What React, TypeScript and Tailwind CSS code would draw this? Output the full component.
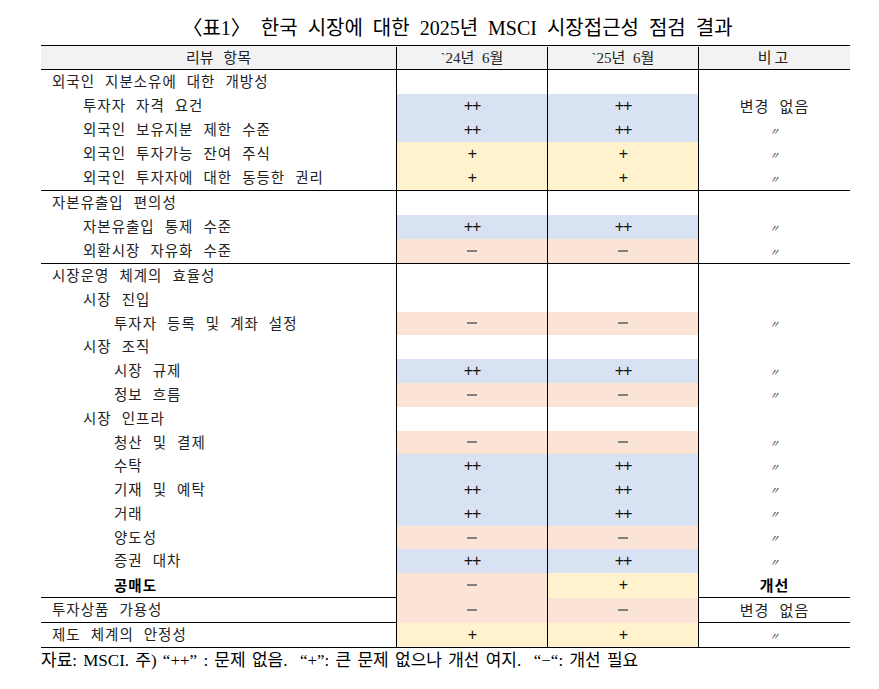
import React from 'react'

type Mark = '++' | '+' | '-' | ''

interface Row {
  label: string
  level: 0 | 1 | 2
  y24?: Mark
  y25?: Mark
  note?: string
  bold?: boolean
}

const SERIF = 'font-["Liberation_Serif","Noto_Sans_CJK_KR",serif]'
const SANS = 'font-["Liberation_Sans","Noto_Sans_CJK_KR",sans-serif]'

const groups: { rows: Row[]; heightClass?: string }[] = [
  {
    rows: [
      { label: '외국인 지분소유에 대한 개방성', level: 0 },
      { label: '투자자 자격 요건', level: 1, y24: '++', y25: '++', note: '변경 없음' },
      { label: '외국인 보유지분 제한 수준', level: 1, y24: '++', y25: '++', note: '〃' },
      { label: '외국인 투자가능 잔여 주식', level: 1, y24: '+', y25: '+', note: '〃' },
      { label: '외국인 투자자에 대한 동등한 권리', level: 1, y24: '+', y25: '+', note: '〃' },
    ],
  },
  {
    rows: [
      { label: '자본유출입 편의성', level: 0 },
      { label: '자본유출입 통제 수준', level: 1, y24: '++', y25: '++', note: '〃' },
      { label: '외환시장 자유화 수준', level: 1, y24: '-', y25: '-', note: '〃' },
    ],
  },
  {
    heightClass: 'h-[334px] grid grid-rows-14',
    rows: [
      { label: '시장운영 체계의 효율성', level: 0 },
      { label: '시장 진입', level: 1 },
      { label: '투자자 등록 및 계좌 설정', level: 2, y24: '-', y25: '-', note: '〃' },
      { label: '시장 조직', level: 1 },
      { label: '시장 규제', level: 2, y24: '++', y25: '++', note: '〃' },
      { label: '정보 흐름', level: 2, y24: '-', y25: '-', note: '〃' },
      { label: '시장 인프라', level: 1 },
      { label: '청산 및 결제', level: 2, y24: '-', y25: '-', note: '〃' },
      { label: '수탁', level: 2, y24: '++', y25: '++', note: '〃' },
      { label: '기재 및 예탁', level: 2, y24: '++', y25: '++', note: '〃' },
      { label: '거래', level: 2, y24: '++', y25: '++', note: '〃' },
      { label: '양도성', level: 2, y24: '-', y25: '-', note: '〃' },
      { label: '증권 대차', level: 2, y24: '++', y25: '++', note: '〃' },
      { label: '공매도', level: 2, y24: '-', y25: '+', note: '개선', bold: true },
    ],
  },
  {
    rows: [{ label: '투자상품 가용성', level: 0, y24: '-', y25: '-', note: '변경 없음' }],
  },
  {
    rows: [{ label: '제도 체계의 안정성', level: 0, y24: '+', y25: '+', note: '〃' }],
  },
]

const INDENT: Record<number, string> = { 0: 'pl-[11px]', 1: 'pl-[42px]', 2: 'pl-[73px]' }

function MarkCell({ mark }: { mark?: Mark }) {
  const bg =
    mark === '++' ? 'bg-[#d9e2f3]' : mark === '+' ? 'bg-[#fff2cc]' : mark === '-' ? 'bg-[#fbe4d5]' : 'bg-white'
  return (
    <div className={`border-l border-black flex items-center justify-center ${bg}`}>
      {mark === '-' ? (
        <span className="block w-[10px] h-[2px] bg-[#808080]" />
      ) : (
        <span className="text-[16px] leading-none text-[#111] tracking-[-1px]">{mark}</span>
      )}
    </div>
  )
}

function TableRow({ row, fixed }: { row: Row; fixed: boolean }) {
  return (
    <div className={`grid grid-cols-[355px_151px_151px_152px] ${fixed ? 'h-6' : ''}`}>
      <div
        className={`flex items-center pt-[2px] ${INDENT[row.level]} text-[14.5px] tracking-[1px] text-[#222] [word-spacing:5px] ${row.bold ? 'font-bold text-black' : ''}`}
      >
        {row.label}
      </div>
      <MarkCell mark={row.y24} />
      <MarkCell mark={row.y25} />
      <div className="border-l border-black flex items-center justify-center pt-[2px]">
        {row.note === '〃' ? (
          <span className="text-[10px] text-[#333] italic">〃</span>
        ) : (
          <span
            className={`text-[15px] tracking-[1px] text-[#222] [word-spacing:5px] ${row.bold ? 'font-bold text-black' : ''}`}
          >
            {row.note}
          </span>
        )}
      </div>
    </div>
  )
}

export default function App() {
  return (
    <div className={`w-[879px] h-[689px] bg-white ${SANS}`}>
      {/* Title */}
      <div
        className={`h-[45px] pt-[10px] flex items-center justify-center pl-[36px] text-[20px] text-black [word-spacing:5px] ${SERIF}`}
      >
        〈표1〉 한국 시장에 대한 2025년 MSCI 시장접근성 점검 결과
      </div>

      <div className="ml-[41px] w-[809px] border-t border-black">
        {/* Header */}
        <div
          className={`grid grid-cols-[355px_151px_151px_152px] h-6 pt-[1px] bg-[#f2f2f2] border-b border-black text-[15px] text-[#222] ${SERIF}`}
        >
          <div className="flex items-center justify-center [word-spacing:6px]">리뷰 항목</div>
          <div className="border-l border-black flex items-center justify-center [word-spacing:4px]">`24년 6월</div>
          <div className="border-l border-black flex items-center justify-center [word-spacing:4px]">`25년 6월</div>
          <div className="border-l border-black flex items-center justify-center tracking-[3px]">비고</div>
        </div>

        {groups.map((g, gi) => (
          <div key={gi} className={`border-b border-black ${g.heightClass ?? ''}`}>
            {g.rows.map((r, ri) => (
              <TableRow key={ri} row={r} fixed={!g.heightClass} />
            ))}
          </div>
        ))}
      </div>

      {/* Footnote */}
      <div
        className={`pl-[41px] pt-[1px] leading-[24px] text-[17px] text-black whitespace-pre [word-spacing:2px] ${SERIF}`}
      >
        {'자료: MSCI. 주) “++” : 문제 없음.  “+”: 큰 문제 없으나 개선 여지.  “−“: 개선 필요'}
      </div>
    </div>
  )
}
